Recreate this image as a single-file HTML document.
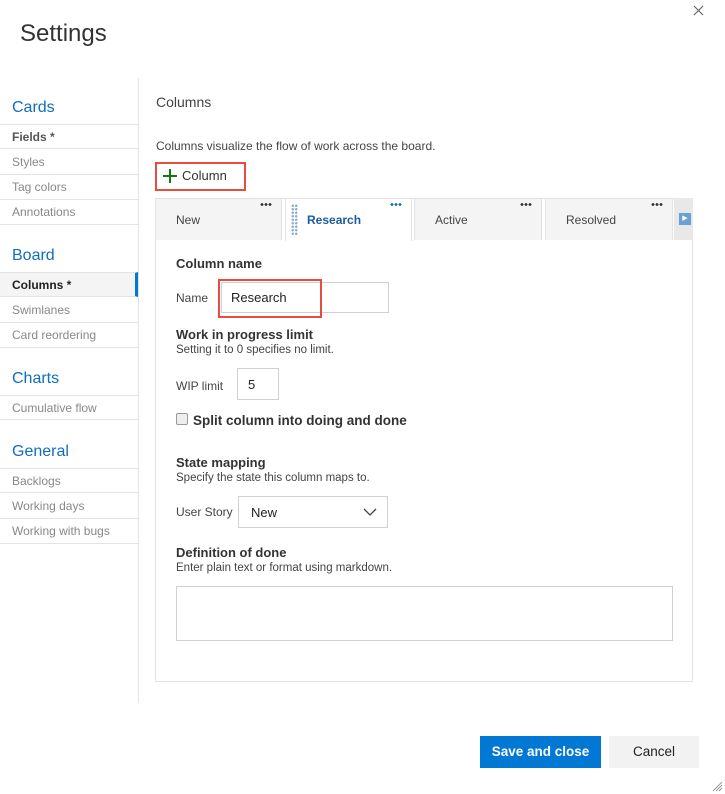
<!DOCTYPE html>
<html><head><meta charset="utf-8"><style>
*{box-sizing:border-box;margin:0;padding:0}
body{width:725px;height:794px;background:#fff;font-family:"Segoe UI","Liberation Sans",sans-serif;color:#333;position:relative;overflow:hidden;font-size:13px}
.a{position:absolute}
.title{left:20px;top:20px;font-size:24px;color:#333;font-weight:300}
.side{left:0;top:78px;width:139px;height:625px;border-right:1px solid #e3e3e3}
.h{position:absolute;left:12px;font-size:16px;color:#106ebe}
.it{position:absolute;left:0;width:138px;height:25px;border-bottom:1px solid #e3e3e3;padding-left:12px;line-height:24px;font-size:12px;color:#888}
.it.b{font-weight:bold;color:#555}
.it.sel{color:#222;background:#f4f4f4;border-right:3px solid #0078d4}
.lbl{font-size:12px;color:#444}
.bold{font-size:13px;font-weight:bold;color:#333}
.tab{position:absolute;top:198px;height:42px;background:#f4f4f4;border:1px solid #e3e3e3;border-bottom:none;font-size:12px;color:#444;padding:14px 0 0 20px}
.dots{position:absolute;right:9px;top:4px;width:12px;height:3px;background:radial-gradient(circle,#333 1.3px,transparent 1.5px) 0 0/4px 3px}
.inp{border:1px solid #d0d0d0;background:#fff}
</style></head><body>
<div class="a title">Settings</div>
<svg class="a" style="left:693px;top:5px" width="11" height="11"><path d="M1 1L10 10M10 1L1 10" stroke="#666" stroke-width="1.2"/></svg>
<div class="a side">
<div class="h" style="top:21px">Cards</div>
<div class="it b" style="top:46px;border-top:1px solid #e3e3e3">Fields *</div>
<div class="it" style="top:72px">Styles</div>
<div class="it" style="top:97px">Tag colors</div>
<div class="it" style="top:122px">Annotations</div>
<div class="h" style="top:169px">Board</div>
<div class="it b sel" style="top:194px;border-top:1px solid #e3e3e3;color:#222">Columns *</div>
<div class="it" style="top:220px">Swimlanes</div>
<div class="it" style="top:245px">Card reordering</div>
<div class="h" style="top:292px">Charts</div>
<div class="it" style="top:317px;border-top:1px solid #e3e3e3">Cumulative flow</div>
<div class="h" style="top:365px">General</div>
<div class="it" style="top:390px;border-top:1px solid #e3e3e3">Backlogs</div>
<div class="it" style="top:416px">Working days</div>
<div class="it" style="top:441px">Working with bugs</div>
</div>
<div class="a" style="left:156px;top:94px;font-size:14px;color:#444">Columns</div>
<div class="a lbl" style="left:156px;top:139px">Columns visualize the flow of work across the board.</div>
<div class="a" style="left:155px;top:162px;width:91px;height:29px;border:2px solid #e74c3c"></div>
<svg class="a" style="left:163px;top:169px" width="14" height="14"><path d="M7 0V14M0 7H14" stroke="#107c10" stroke-width="2"/></svg>
<div class="a" style="left:182px;top:168px;font-size:13px;color:#333">Column</div>
<div class="a" style="left:155px;top:198px;width:538px;height:484px;border:1px solid #e3e3e3"></div>
<div class="a" style="left:674px;top:198px;width:19px;height:42px;background:#e8e8e8"></div>
<div class="a" style="left:679px;top:213px;width:12px;height:12px;background:#6aa0d8;color:#fff;font-size:7px;text-align:center;line-height:12px">▶</div>
<div class="tab" style="left:155px;width:127px">New<span class="dots"></span></div>
<div class="tab" style="left:285px;width:127px;background:#fff;height:43px;font-weight:bold;color:#1a5c9e;padding-left:21px">Research<span class="dots" style="background:radial-gradient(circle,#106ebe 1.3px,transparent 1.5px) 0 0/4px 3px"></span>
<span style="position:absolute;left:5px;top:5px;width:7px;height:32px;background:radial-gradient(circle,#8fb0d0 1.3px,transparent 1.4px) 0 0/3.5px 3.5px"></span></div>
<div class="tab" style="left:414px;width:128px">Active<span class="dots"></span></div>
<div class="tab" style="left:545px;width:128px">Resolved<span class="dots"></span></div>
<div class="a bold" style="left:176px;top:256px">Column name</div>
<div class="a lbl" style="left:176px;top:291px">Name</div>
<div class="a inp" style="left:221px;top:282px;width:168px;height:31px"></div>
<div class="a" style="left:218px;top:279px;width:104px;height:39px;border:2px solid #e74c3c"></div>
<div class="a" style="left:231px;top:290px;font-size:13px;color:#222">Research</div>
<div class="a bold" style="left:176px;top:327px">Work in progress limit</div>
<div class="a lbl" style="left:176px;top:344px;font-size:11.5px">Setting it to 0 specifies no limit.</div>
<div class="a lbl" style="left:176px;top:379px">WIP limit</div>
<div class="a inp" style="left:237px;top:368px;width:42px;height:32px;padding:8px 0 0 10px;font-size:13px;color:#222">5</div>
<div class="a" style="left:176px;top:413px;width:12px;height:12px;border:1px solid #999;border-radius:2px;background:#eee"></div>
<div class="a bold" style="left:193px;top:413px;font-size:13.5px">Split column into doing and done</div>
<div class="a bold" style="left:176px;top:455px">State mapping</div>
<div class="a lbl" style="left:176px;top:472px;font-size:11.5px">Specify the state this column maps to.</div>
<div class="a lbl" style="left:176px;top:505px">User Story</div>
<div class="a inp" style="left:238px;top:496px;width:150px;height:32px;padding:8px 0 0 12px;font-size:13px;color:#222">New
<svg style="position:absolute;right:10px;top:11px" width="14" height="9" viewBox="0 0 14 9"><path d="M1 1l6 6 6-6" fill="none" stroke="#444" stroke-width="1.3"/></svg></div>
<div class="a bold" style="left:176px;top:545px">Definition of done</div>
<div class="a lbl" style="left:176px;top:562px;font-size:11.5px">Enter plain text or format using markdown.</div>
<div class="a inp" style="left:176px;top:586px;width:497px;height:55px"></div>
<div class="a" style="left:480px;top:736px;width:121px;height:32px;background:#0078d4;color:#fff;font-weight:bold;font-size:13.5px;text-align:center;line-height:31px">Save and close</div>
<div class="a" style="left:609px;top:736px;width:90px;height:32px;background:#f2f2f2;color:#222;font-size:13.5px;text-align:center;line-height:31px">Cancel</div>
<svg class="a" style="left:712px;top:781px" width="11" height="11"><path d="M10 1L1 10M10 4L4 10M10 7L7 10" stroke="#999"/></svg>
</body></html>
